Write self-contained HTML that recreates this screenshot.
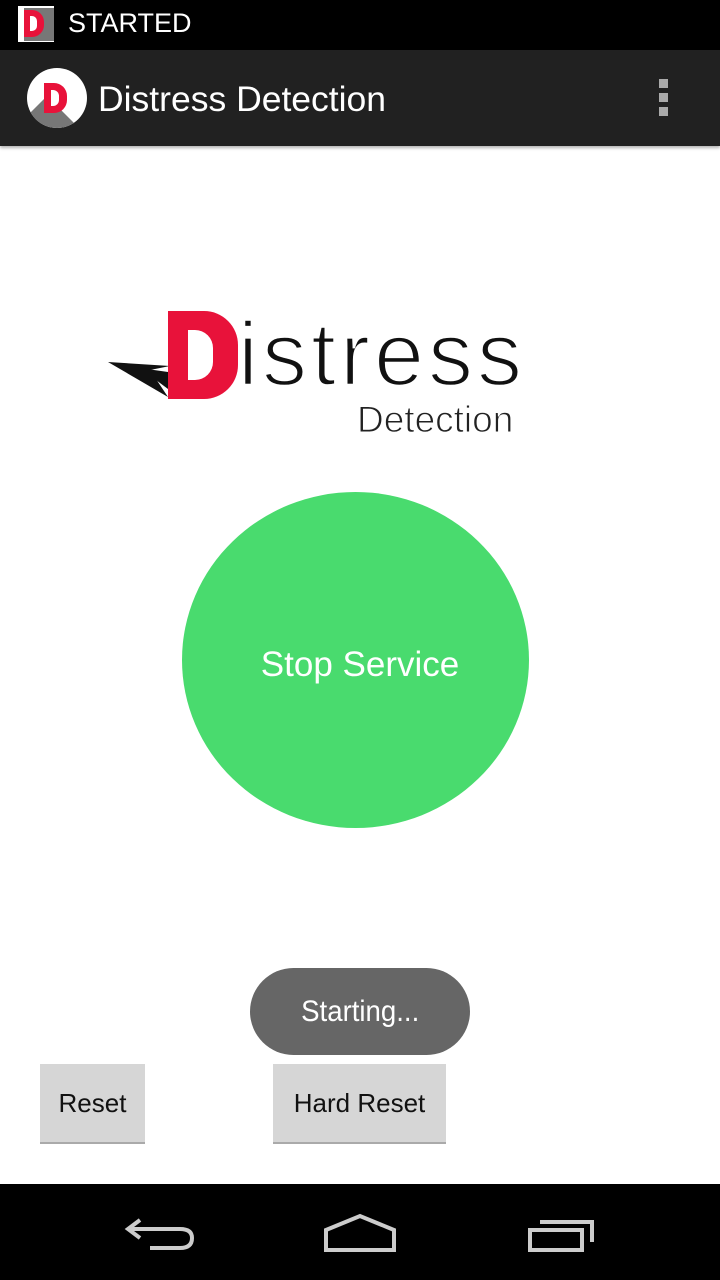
<!DOCTYPE html>
<html><head><style>
body{margin:0;width:720px;height:1280px;position:relative;background:#fff;font-family:"Liberation Sans",sans-serif;overflow:hidden}
.abs{position:absolute}
.btn{position:absolute;background:#d6d6d6;border-bottom:2px solid #aaa;box-sizing:border-box;font-size:26px;color:#111;display:flex;align-items:center;justify-content:center}
</style></head><body>
<div class="abs" style="left:0;top:0;width:720px;height:50px;background:#000"></div>
<div class="abs" style="left:18px;top:6px;width:36px;height:36px;background:#fff"></div>
<div class="abs" style="left:24px;top:8px;width:30px;height:33px;background:#777"></div>
<div class="abs" style="left:18px;top:6px;width:36px;height:36px;overflow:hidden"><div style="position:absolute;left:6px;top:4px;width:20px;height:27px;background:#e8123a;border-radius:0 12px 12px 0"></div><div style="position:absolute;left:12px;top:10px;width:7px;height:15px;background:#fff;border-radius:0 5px 5px 0"></div></div>
<div class="abs" style="left:68px;top:8px;color:#fff;font-size:27px">STARTED</div>
<div class="abs" style="left:0;top:50px;width:720px;height:96px;background:#212121;box-shadow:0 2px 3px rgba(0,0,0,.3)"></div>
<div class="abs" style="left:27px;top:68px;width:60px;height:60px;border-radius:50%;background:#fff;overflow:hidden">
<div style="position:absolute;left:20px;top:28px;width:60px;height:40px;background:#777;transform:rotate(45deg);transform-origin:0 0"></div>
<div style="position:absolute;left:17px;top:15px;width:23px;height:30px;background:#e8123a;border-radius:0 13px 13px 0"></div>
<div style="position:absolute;left:24px;top:22px;width:8px;height:16px;background:#fff;border-radius:0 6px 6px 0"></div></div>
<div class="abs" style="left:98px;top:79px;color:#fff;font-size:35.5px">Distress Detection</div>
<div class="abs" style="left:659px;top:79px;width:9px;height:9px;background:#aaa;box-shadow:0 14px 0 #aaa,0 28px 0 #aaa"></div>
<svg class="abs" style="left:0;top:0" width="720" height="460"><polygon points="108,362 170,366 150,370 168,397" fill="#111"/><polygon points="140,368 210,378 200,392 180,398" fill="#111"/></svg>
<div class="abs" style="left:168px;top:311px;width:70px;height:88px;background:#e8123a;border-radius:0 34px 34px 0"></div>
<div class="abs" style="left:188px;top:330px;width:25px;height:50px;background:#fff;border-radius:0 18px 18px 0"></div>
<div class="abs" style="left:238px;top:304px;font-size:90px;color:#111;letter-spacing:4px;-webkit-text-stroke:2.5px #fff;paint-order:normal">istress</div>
<div class="abs" style="left:357px;top:399px;font-size:37px;color:#222;-webkit-text-stroke:1px #fff">Detection</div>
<div class="abs" style="left:182px;top:492px;width:347px;height:336px;border-radius:50%;background:#49db6e"></div>
<div class="abs" style="left:160px;top:645px;width:400px;text-align:center;color:#fff;font-size:35px">Stop Service</div>
<div class="abs" style="left:250px;top:968px;width:220px;height:87px;border-radius:44px;background:#666;color:#fff;font-size:30px;display:flex;align-items:center;justify-content:center"><span style="display:inline-block;transform:scaleX(0.92)">Starting...</span></div>
<div class="btn" style="left:40px;top:1064px;width:105px;height:80px">Reset</div>
<div class="btn" style="left:273px;top:1064px;width:173px;height:80px">Hard Reset</div>
<div class="abs" style="left:0;top:1184px;width:720px;height:96px;background:#000"></div>
<svg class="abs" style="left:0;top:1184px" width="720" height="96" fill="none" stroke="#ccc" stroke-width="4">
<path d="M140 36 L128 45 L140 54 M128 45 H180 Q192 45 192 54 Q192 64 180 64 H150"/>
<path d="M326 66 V46 L360 32 L394 46 V66 Z"/>
<path d="M530 46 H582 V66 H530 Z M540 38 H592 V58"/>
</svg>
</body></html>
